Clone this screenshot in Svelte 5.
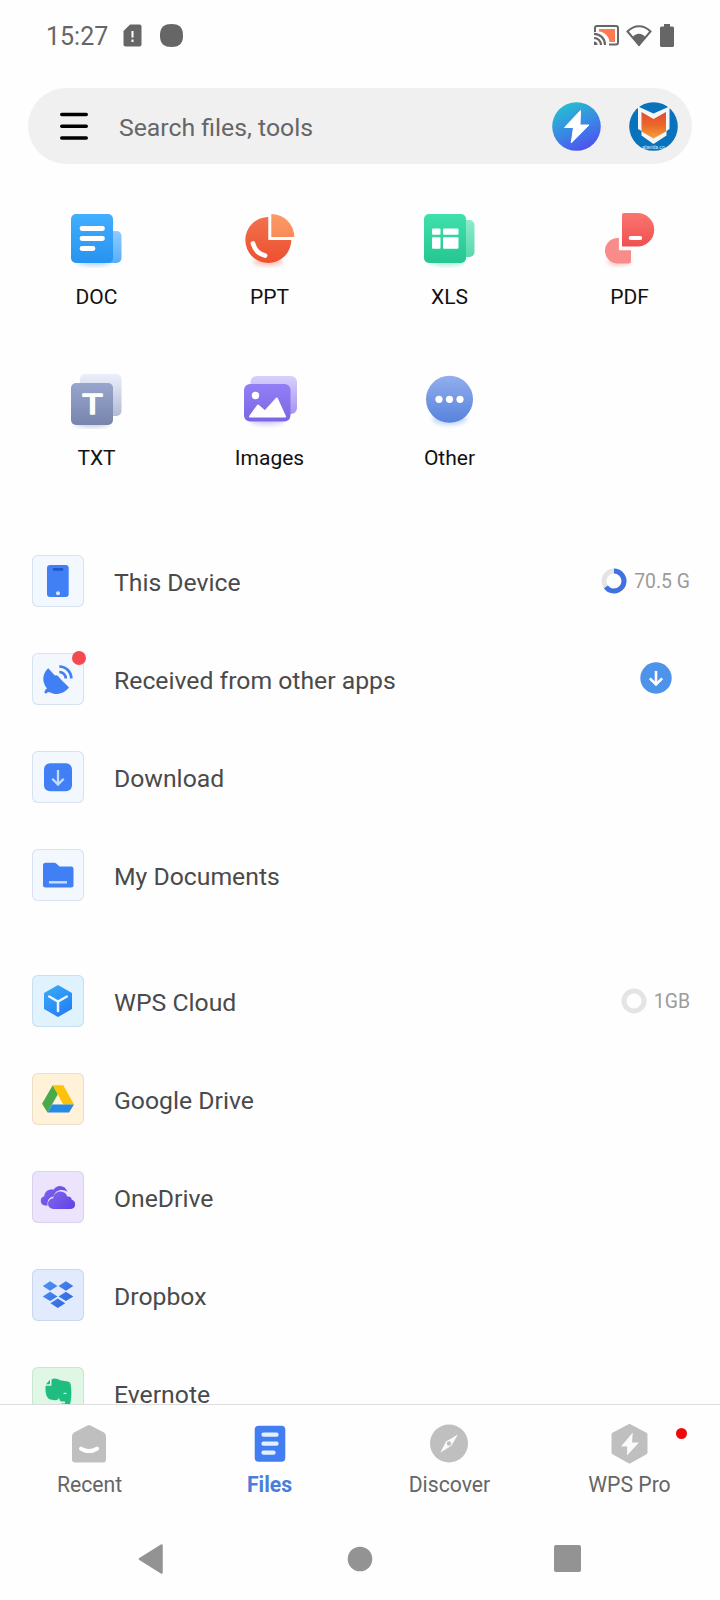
<script>
	const types = ['DOC', 'PPT', 'XLS', 'PDF', 'TXT', 'Images', 'Other'];
	const local = [
		{ name: 'This Device', icon: 'phone', used: 65, size: '70.5 G' },
		{ name: 'Received from other apps', icon: 'dish', dot: true, download: true },
		{ name: 'Download', icon: 'download' },
		{ name: 'My Documents', icon: 'folder' }
	];
	const cloud = [
		{ name: 'WPS Cloud', icon: 'wps', used: 0, size: '1GB' },
		{ name: 'Google Drive', icon: 'drive' },
		{ name: 'OneDrive', icon: 'onedrive' },
		{ name: 'Dropbox', icon: 'dropbox' },
		{ name: 'Evernote', icon: 'evernote' }
	];
	const tabs = ['Recent', 'Files', 'Discover', 'WPS Pro'];
	let active = $state('Files');
</script>

<svg class="defs" width="0" height="0">
	<defs>
		<linearGradient id="doc" x2="0" y2="1"><stop stop-color="#42aefd" /><stop offset="1" stop-color="#2793f0" /></linearGradient>
		<linearGradient id="docBack" x2="0" y2="1"><stop stop-color="#8fcbff" /><stop offset="1" stop-color="#58aefa" /></linearGradient>
		<linearGradient id="ppt" x2="0" y2="1"><stop stop-color="#f0714c" /><stop offset="1" stop-color="#ee5030" /></linearGradient>
		<linearGradient id="pptTop" x2="0" y2="1"><stop stop-color="#fb9a68" /><stop offset="1" stop-color="#f98b59" /></linearGradient>
		<linearGradient id="xls" x2="0" y2="1"><stop stop-color="#3fe0ab" /><stop offset="1" stop-color="#25c691" /></linearGradient>
		<linearGradient id="xlsBack" x2="0" y2="1"><stop stop-color="#8eebcb" /><stop offset="1" stop-color="#55d9ae" /></linearGradient>
		<linearGradient id="pdf" x2="0" y2="1"><stop stop-color="#fc7570" /><stop offset="1" stop-color="#ee5050" /></linearGradient>
		<linearGradient id="txt" x2="0" y2="1"><stop stop-color="#98a6cc" /><stop offset="1" stop-color="#7785ad" /></linearGradient>
		<linearGradient id="txtBack" x2="0" y2="1"><stop stop-color="#eceefa" /><stop offset="1" stop-color="#b3bbd6" /></linearGradient>
		<linearGradient id="img" x2="0" y2="1"><stop stop-color="#927ff5" /><stop offset="1" stop-color="#7c66e4" /></linearGradient>
		<linearGradient id="imgBack" x2="0" y2="1"><stop stop-color="#d8d0fb" /><stop offset="1" stop-color="#a694f0" /></linearGradient>
		<linearGradient id="other" x2="0" y2="1"><stop stop-color="#92aeee" /><stop offset="1" stop-color="#5783dc" /></linearGradient>
		<linearGradient id="bolt" x1=".2" y1="0" x2=".7" y2="1"><stop stop-color="#20c5cf" /><stop offset=".55" stop-color="#3b86e5" /><stop offset="1" stop-color="#4f4fef" /></linearGradient>
		<linearGradient id="shield" x2="0" y2="1"><stop stop-color="#e24b32" /><stop offset=".5" stop-color="#eb6829" /><stop offset="1" stop-color="#f5a03a" /></linearGradient>
		<linearGradient id="wps" x2=".6" y2="1"><stop stop-color="#3aabf8" /><stop offset="1" stop-color="#2581f5" /></linearGradient>
		<linearGradient id="one" x2="1" y2=".6"><stop stop-color="#8167ee" /><stop offset="1" stop-color="#6646e4" /></linearGradient>
		<linearGradient id="drop" gradientUnits="userSpaceOnUse" x1="10" y1="12" x2="36" y2="40"><stop stop-color="#5094f5" /><stop offset="1" stop-color="#2f64df" /></linearGradient>
		<filter id="soft" x="-30%" y="-100%" width="160%" height="300%"><feGaussianBlur stdDeviation="2" /></filter>
	</defs>
</svg>

<div class="screen">
	<header class="status">
		<span class="time">15:27</span>
		<svg class="sim" width="19" height="23"><path d="M7 .5h9.5a2 2 0 0 1 2 2v18a2 2 0 0 1-2 2h-14a2 2 0 0 1-2-2V7z" fill="#666" /><path d="M9.500 7v6.500M9.500 15.500v2.500" stroke="#fff" stroke-width="2" /></svg>
		<svg class="blob" width="23" height="23"><path d="M11.500 0C19 0 23 3 23 11.500S19 23 11.500 23 0 20 0 11.500 4 0 11.500 0z" fill="#666" /></svg>
		<div class="signals">
			<svg width="25" height="21">
				<path d="M1 7V3a2 2 0 0 1 2-2h19a2 2 0 0 1 2 2v14.500a2 2 0 0 1-2 2h-7" fill="none" stroke="#666" stroke-width="2" />
				<path d="M5 4h16v13h-5.500C15 11 10.500 7 5 6.500z" fill="#ff7a50" />
				<path d="M0 8.800a11 11 0 0 1 11 11.200M0 13a7 7 0 0 1 7 7" fill="none" stroke="#666" stroke-width="2.200" />
				<path d="M0 16.500a3.500 3.500 0 0 1 3.500 3.500H0z" fill="#666" />
			</svg>
			<svg width="26" height="22"><path d="M1.500 6.500C8-.5 18-.5 24.500 6.500L13 20z" fill="none" stroke="#666" stroke-width="2" /><path d="M6.500 12.500C9.500 7.500 16.500 7.500 19.500 12.500L13 21z" fill="#666" /></svg>
			<svg width="14" height="23"><path d="M4 0h6v2.500h2.500A1.500 1.500 0 0 1 14 4v17.500a1.500 1.500 0 0 1-1.500 1.500h-11A1.500 1.500 0 0 1 0 21.500V4a1.500 1.500 0 0 1 1.500-1.500H4z" fill="#666" /></svg>
		</div>
	</header>

	<div class="search">
		<svg class="menu" width="28" height="28"><path d="M1.750 2.500h24.500M1.750 14.300h24.500M1.750 26h24.500" stroke="#000" stroke-width="3.500" stroke-linecap="round" /></svg>
		<span class="placeholder">Search files, tools</span>
		<svg class="flash" width="49" height="49" viewBox="0 0 49 49"><circle cx="24.500" cy="24.500" r="24.300" fill="url(#bolt)" /><path d="M28.500 8.500 12.500 25.500h9l-2.300 15.500L37 23h-9z" fill="#fff" stroke="#fff" stroke-linejoin="round" /></svg>
		<svg class="avatar" width="49" height="49" viewBox="0 0 49 49">
			<circle cx="24.500" cy="24.500" r="24.300" fill="#0872bc" />
			<path d="M9 4.500 24.500 11.500 40.500 4.500V27L37.500 29V33.500L24.500 42 12.500 33.500V29L9 27z" fill="#f4f6f8" />
			<path d="M12.500 10 24.500 17 37 10V29.500L24.500 36.500 12.500 29.500z" fill="url(#shield)" />
			<text x="24.500" y="46.500" font-size="5" fill="#d5efff" text-anchor="middle">alavida.co</text>
		</svg>
	</div>

	<div class="types">
		{#each types as type}
			<div class="type">
				<svg width="60" height="60">
					{#if type == 'DOC'}
						<ellipse cx="27" cy="54" rx="17" ry="4" fill="#2c96f5" opacity=".35" filter="url(#soft)" />
						<rect x="34" y="23" width="20.500" height="32" rx="5" fill="url(#docBack)" />
						<rect x="4" y="6" width="42" height="49" rx="5" fill="url(#doc)" />
						<path d="M15 20.500h20.500M15 30.500h20.500M15 40.500h11" stroke="#fff" stroke-width="4.800" stroke-linecap="round" />
					{:else if type == 'PPT'}
						<ellipse cx="28" cy="54" rx="15" ry="4" fill="#f0603d" opacity=".35" filter="url(#soft)" />
						<path d="M28.300 9A23 23 0 1 0 51.300 32h-23z" fill="url(#ppt)" />
						<path d="M31.300 6a23 23 0 0 1 23 23h-23z" fill="url(#pptTop)" />
						<path d="M13 35.500Q15.500 45 25 47.500" stroke="#fff" stroke-width="4.800" fill="none" stroke-linecap="round" />
					{:else if type == 'XLS'}
						<ellipse cx="27" cy="54" rx="17" ry="4" fill="#25ce95" opacity=".35" filter="url(#soft)" />
						<rect x="34" y="12" width="20.500" height="37" rx="5" fill="url(#xlsBack)" />
						<rect x="4" y="6" width="42" height="49" rx="5" fill="url(#xls)" />
						<g fill="#fff"><rect x="12" y="20.500" width="8.500" height="6.300" rx="1" /><rect x="23" y="20.500" width="15.500" height="6.300" rx="1" /><rect x="12" y="29.200" width="8.500" height="11.500" rx="1" /><rect x="23" y="29.200" width="15.500" height="11.500" rx="1" /></g>
					{:else if type == 'PDF'}
						<ellipse cx="19" cy="54" rx="12" ry="3.500" fill="#f56060" opacity=".35" filter="url(#soft)" />
						<path d="M18.900 30v12.300H31v11.200a2 2 0 0 1-2 2H17.700a12.750 12.750 0 0 1 0-25.500z" fill="#f78c8a" />
						<path d="M24 5h13.500a16.600 16.600 0 0 1 0 33.500H22V7a2 2 0 0 1 2-2z" fill="url(#pdf)" />
						<rect x="28.700" y="28" width="13.500" height="4" rx="2" fill="#fff" />
					{:else if type == 'TXT'}
						<ellipse cx="25" cy="55" rx="17" ry="4" fill="#7b8ab5" opacity=".35" filter="url(#soft)" />
						<rect x="13" y="5" width="41.500" height="42" rx="5" fill="url(#txtBack)" />
						<rect x="4" y="14" width="42" height="42" rx="5" fill="url(#txt)" />
						<text class="letter" transform="translate(25.500 45) scale(1.200 1)">T</text>
					{:else if type == 'Images'}
						<ellipse cx="27" cy="52" rx="17" ry="4" fill="#8370ec" opacity=".35" filter="url(#soft)" />
						<rect x="10.500" y="7" width="46.500" height="38" rx="6" fill="url(#imgBack)" />
						<rect x="4" y="15" width="46.500" height="37.500" rx="6" fill="url(#img)" />
						<circle cx="15.500" cy="26.500" r="3.700" fill="#fff" />
						<path d="M10 47.500 18 36.500 25 42.500 36.800 29.500 45 47.500z" fill="#fff" stroke="#fff" stroke-width="2" stroke-linejoin="round" />
					{:else}
						<ellipse cx="29.500" cy="50" rx="17" ry="6" fill="#6d9bf0" opacity=".4" filter="url(#soft)" />
						<circle cx="29.500" cy="30.300" r="23.500" fill="url(#other)" />
						<g fill="#fff"><circle cx="19" cy="30.300" r="3.600" /><circle cx="29.500" cy="30.300" r="3.600" /><circle cx="40" cy="30.300" r="3.600" /></g>
					{/if}
				</svg>
				<span>{type}</span>
			</div>
		{/each}
	</div>

	<main class="places">
		{#each [local, cloud] as group}
			<div class="group">
				{#each group as place}
					<div class="row">
						<div class="tile {place.icon}">
							<svg width="52" height="52">
								{#if place.icon == 'phone'}
									<rect x="15" y="10" width="21.700" height="32" rx="3" fill="#417ff5" />
									<rect x="20.800" y="13" width="10.500" height="2.700" rx="1" fill="#1e57cf" />
									<circle cx="26" cy="38.300" r="2" fill="#d7e8ff" />
								{:else if place.icon == 'dish'}
									<path d="M16.300 15.300C19 18 20.500 20 23 22.500Q25.500 21.500 27 24.300C30 28 34 31 37 34.500C32 41 23.500 42.500 18.500 39.500L16 39 14 40.800 12.300 39.500 13.500 36.500 15 35.500C9.500 29 10.300 20.500 16.300 15.300z" fill="#417ff5" />
									<path d="M27.300 13.500A12 12 0 0 1 39.300 25.500M27.300 19A6.500 6.500 0 0 1 33.800 25.500" fill="none" stroke="#417ff5" stroke-width="2.700" />
								{:else if place.icon == 'download'}
									<rect x="12" y="12.300" width="28" height="28" rx="6" fill="#417ff5" />
									<path d="M26 19v14M20.300 27.800 26 33.500 31.700 27.800" fill="none" stroke="#c5ddfd" stroke-width="2.300" />
								{:else if place.icon == 'folder'}
									<path d="M13.500 13.700H22q1.500 0 2.500 1l3 2.800H39a2.500 2.500 0 0 1 2.500 2.500v16a2.500 2.500 0 0 1-2.500 2.500H13.500A2.500 2.500 0 0 1 11 36V16.200a2.500 2.500 0 0 1 2.500-2.500z" fill="#417ff5" />
									<path d="M17 33.300h18" stroke="#c5ddfd" stroke-width="2.500" />
								{:else if place.icon == 'wps'}
									<path d="M26 11 39 18.500V33.500L26 41 13 33.500V18.500z" fill="url(#wps)" stroke="url(#wps)" stroke-width="2" stroke-linejoin="round" />
									<path d="M17.200 21.500 26 26.500 34.800 21.500M26 26.500V36" fill="none" stroke="#e9f6ff" stroke-width="2.500" stroke-linecap="round" />
								{:else if place.icon == 'drive'}
									<path d="M20.700 12.300 26 21 15.500 39.500 10 30.800z" fill="#48ab4b" />
									<path d="M20.700 12.300H31.300L42 31.500H31.300z" fill="#fdc20a" />
									<path d="M20.200 31.500H42L37 39.500H15.500z" fill="#2589e6" />
								{:else if place.icon == 'onedrive'}
									<path d="M13 34.500a4.700 4.700 0 0 1-.8-9.200Q12.500 19.500 18.500 18.500Q20 18 21.500 18.700Q24 15 28 15Q33.500 15 35.500 21C31 17.500 23 18.500 21.500 25.500C16 26.500 15 31 15.700 34.500z" fill="url(#one)" />
									<path d="M21.500 38a5.200 5.200 0 0 1-.3-10.800C22 19 33 18.500 35.300 25.500Q39 25 39.800 28.700A4.800 4.800 0 0 1 39 38z" fill="url(#one)" />
								{:else if place.icon == 'dropbox'}
									<path d="M18.100 12.300 25.500 17 18.100 21.700 10.700 17zM33.900 12.300 41.300 17 33.900 21.700 26.500 17zM18.100 22.700 25.500 27.400 18.100 32 10.700 27.400zM33.900 22.700 41.300 27.400 33.900 32 26.500 27.400zM25.800 29.600 33.200 34.300 25.800 39 18.400 34.300z" fill="url(#drop)" />
								{:else}
									<path d="M13.500 18.800H18.500a1 1 0 0 0 1-1V12.500Q21.500 11.300 24 11.700Q27 11.900 28 13.300L36 14.500Q38.500 15 38.700 17.500Q40 26 38.700 34Q38.500 40 33 41H29.500V36.500H33V34.500H29.500Q28 34.500 27.500 32.500L27 31Q26 33.300 23 33.200L18.500 32.500Q14.500 32 13.500 24z" fill="#1fbd80" />
									<path d="M14 17.300 18 12.800V17.300z" fill="#1fbd80" />
									<path d="M31 27Q33 23.800 35 27z" fill="#dff7e4" />
								{/if}
							</svg>
							{#if place.dot}<i class="badge"></i>{/if}
						</div>
						<span class="name">{place.name}</span>
						{#if place.size}
							<svg width="26" height="26" viewBox="0 0 26 26">
								<circle cx="13" cy="13" r="10" fill="none" stroke="#e4e4e4" stroke-width="5" />
								<circle cx="13" cy="13" r="10" fill="none" stroke="#3f72e0" stroke-width="5" pathLength="100" stroke-dasharray="{place.used} 200" transform="rotate(-90 13 13)" />
							</svg>
							<span class="size">{place.size}</span>
						{/if}
						{#if place.download}
							<svg class="get" width="32" height="32"><circle cx="16" cy="16" r="15.700" fill="#4c93e9" /><path d="M16 9v13M9.800 16.300 16 22.500 22.200 16.300" fill="none" stroke="#fff" stroke-width="2.600" /></svg>
						{/if}
					</div>
				{/each}
			</div>
		{/each}
	</main>

	<nav class="tabs">
		{#each tabs as tab}
			<button class:active={active == tab} onclick={() => (active = tab)}>
				<svg width="40" height="40">
					{#if tab == 'Recent'}
						<path d="M17.500 1.500Q19 .5 20.500 1.500L34 8.500Q36 10 36 12V35.500a3 3 0 0 1-3 3H5a3 3 0 0 1-3-3V12Q2 10 4 8.500z" fill="#bfbfbf" />
						<path d="M11 24.700Q19 29.500 27 24.700" stroke="#fff" stroke-width="4" stroke-linecap="round" fill="none" />
					{:else if tab == 'Files'}
						<rect x="4.700" y="1.700" width="30.600" height="36" rx="4" fill="#427ef2" />
						<path d="M13.500 10.700h13M13.500 19.700h13M13.500 28.700h10" stroke="#e1efff" stroke-width="4.300" stroke-linecap="round" />
					{:else if tab == 'Discover'}
						<circle cx="19" cy="19.500" r="19" fill="#bfbfbf" />
						<path d="M28 10.500 21.500 21.500 10.300 28.700 16 17.500z" fill="#fafafa" />
						<circle cx="19" cy="19.500" r="2.200" fill="#bfbfbf" />
					{:else}
						<path d="M19.500 2 35.500 10.500V28.500L19.500 37.500 3.500 28.500V10.500z" fill="#bfbfbf" stroke="#bfbfbf" stroke-width="4" stroke-linejoin="round" />
						<path d="M22.800 8.500 11 22.500h6.200L17 31.500 29 18.500h-7z" fill="#fafafa" />
					{/if}
				</svg>
				{tab}
				{#if tab == 'WPS Pro'}<i class="new"></i>{/if}
			</button>
		{/each}
	</nav>

	<footer>
		<svg width="26" height="30"><path d="M23.500 1.500V28.500L2 15z" fill="#939393" stroke="#939393" stroke-width="2.500" stroke-linejoin="round" /></svg>
		<svg width="28" height="26"><circle cx="15" cy="13" r="12.300" fill="#939393" /></svg>
		<svg width="27" height="27"><rect width="27" height="27" rx="2" fill="#939393" /></svg>
	</footer>
</div>

<style>
	:global(body) {
		margin: 0;
		background: #fefefe;
	}
	.screen {
		width: 720px;
		height: 1600px;
		display: flex;
		flex-direction: column;
		overflow: hidden;
		font-family: Roboto, 'Liberation Sans', sans-serif;
		background: #fefefe;
	}
	.screen > * {
		flex: none;
	}
	.defs {
		position: absolute;
	}
	svg {
		display: block;
		flex: none;
	}
	.status {
		display: flex;
		align-items: center;
		height: 70px;
		padding: 0 46px;
	}
	.time {
		width: 77px;
		font-size: 25px;
		color: #666;
		padding-top: 3px;
	}
	.sim {
		margin-top: 1px;
	}
	.blob {
		margin: 1px 0 0 18px;
	}
	.signals {
		display: flex;
		align-items: center;
		gap: 7px;
		margin-left: auto;
		padding-top: 1px;
	}
	.signals svg:last-child {
		margin-left: 1px;
	}
	.search {
		display: flex;
		align-items: center;
		height: 76px;
		margin: 18px 28px 0;
		padding: 0 14px 0 32px;
		border-radius: 38px;
		background: #f0f0f0;
	}
	.placeholder {
		flex: 1;
		margin-left: 31px;
		padding-top: 3px;
		font-size: 24.8px;
		color: #666;
	}
	.flash,
	.avatar {
		margin-top: 1px;
	}
	.avatar {
		margin-left: 28px;
	}
	.types {
		display: grid;
		grid-template-columns: repeat(4, 180px);
		grid-auto-rows: 161px;
		padding-top: 44px;
		height: 324px;
	}
	.type {
		display: flex;
		flex-direction: column;
		align-items: center;
		font-size: 21px;
		line-height: 24px;
		color: #111;
	}
	.type:nth-child(4n + 1) {
		padding-left: 14px;
	}
	.type span {
		margin: 17px 1px 0 0;
	}
	.letter {
		font: 28.5px Roboto, 'Liberation Sans', sans-serif;
		text-anchor: middle;
		fill: #fff;
		stroke: #fff;
		stroke-width: 1.6;
		stroke-linejoin: round;
	}
	.places {
		height: 872px;
		overflow: hidden;
	}
	.group + .group {
		margin-top: 28px;
	}
	.row {
		display: flex;
		align-items: center;
		height: 98px;
		padding: 0 30px 0 32px;
	}
	.tile {
		position: relative;
		width: 52px;
		height: 52px;
		border-radius: 6px;
		background: #f3f8fe;
		box-shadow: inset 0 0 0 1px #d6e2f0;
	}
	.wps {
		background: #e0f2fe;
		box-shadow: inset 0 0 0 1px #c9dfee;
	}
	.drive {
		background: #fff2d9;
		box-shadow: inset 0 0 0 1px #eadfc9;
	}
	.onedrive {
		background: #ece3fd;
		box-shadow: inset 0 0 0 1px #d9d2ec;
	}
	.dropbox {
		background: #e2ebfd;
		box-shadow: inset 0 0 0 1px #cbd8ec;
	}
	.evernote {
		background: #dff7e4;
		box-shadow: inset 0 0 0 1px #c9e6d0;
	}
	.badge {
		position: absolute;
		top: -2px;
		right: -2px;
		width: 14px;
		height: 14px;
		border-radius: 50%;
		background: #f34a50;
	}
	.name {
		flex: 1;
		margin-left: 30px;
		padding-top: 2px;
		font-size: 24.75px;
		color: #4a4a4a;
	}
	.size {
		margin-left: 7px;
		padding-top: 1px;
		font-size: 19.4px;
		color: #9b9b9b;
	}
	.get {
		margin-right: 18px;
		margin-top: -3px;
	}
	.tabs {
		display: grid;
		grid-template-columns: repeat(4, 180px);
		height: 112px;
		border-top: 1px solid #dedede;
	}
	button {
		position: relative;
		display: flex;
		flex-direction: column;
		align-items: center;
		gap: 9px;
		border: 0;
		padding: 19px 1px 0 0;
		background: none;
		font: 21.2px/24px Roboto, 'Liberation Sans', sans-serif;
		color: #666;
	}
	button.active {
		font-weight: bold;
		color: #4a7edc;
	}
	.new {
		position: absolute;
		top: 23px;
		left: 136px;
		width: 11px;
		height: 11px;
		border-radius: 50%;
		background: #f00909;
	}
	footer {
		display: flex;
		align-items: center;
		justify-content: space-between;
		height: 83px;
		padding: 0 139px 0 138px;
	}
</style>
